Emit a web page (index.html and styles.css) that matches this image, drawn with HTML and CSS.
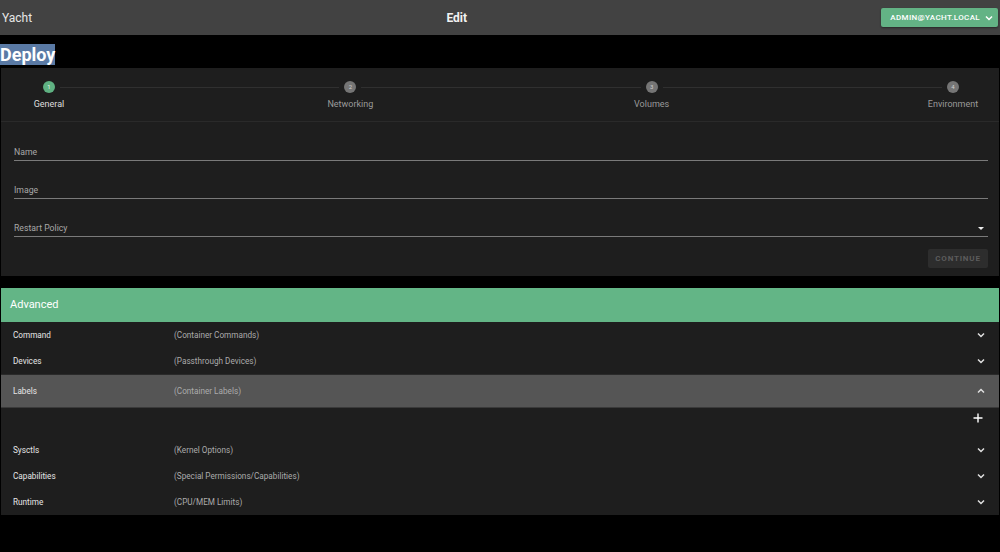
FILE: index.html
```html
<!DOCTYPE html>
<html lang="en">
<head>
    <meta charset="UTF-8">
    <meta name="viewport" content="width=device-width, initial-scale=1.0">
    <title>Yacht - Edit</title>
    <link rel="stylesheet" href="styles.css">
</head>
<body>
    <header class="topbar">
        <span class="brand">Yacht</span>
        <span class="spacer"></span>
        <span class="page-title">Edit</span>
        <span class="spacer"></span>
        <button class="user-btn">ADMIN@YACHT.LOCAL
            <svg width="8" height="6" viewBox="0 0 8 6"><polyline points="1,1.5 4,4.5 7,1.5" fill="none" stroke="#fff" stroke-width="1.5"/></svg>
        </button>
    </header>

    <h1 class="deploy"><span>Deploy</span></h1>

    <section class="card">
        <div class="stepper">
            <div class="step active"><span class="dot">1</span><span class="step-label">General</span></div>
            <div class="connector"></div>
            <div class="step"><span class="dot">2</span><span class="step-label">Networking</span></div>
            <div class="connector"></div>
            <div class="step"><span class="dot">3</span><span class="step-label">Volumes</span></div>
            <div class="connector"></div>
            <div class="step"><span class="dot">4</span><span class="step-label">Environment</span></div>
        </div>
        <form class="form">
            <div class="field"><span class="field-label">Name</span></div>
            <div class="field"><span class="field-label">Image</span></div>
            <div class="field"><span class="field-label">Restart Policy</span><span class="caret"></span></div>
            <div class="actions">
                <button type="button" class="continue" disabled>CONTINUE</button>
            </div>
        </form>
    </section>

    <section class="card advanced">
        <div class="adv-header">Advanced</div>
        <div class="row"><span class="row-title">Command</span><span class="row-sub">(Container Commands)</span><svg class="chev" width="8" height="6" viewBox="0 0 8 6"><polyline points="1,1.5 4,4.5 7,1.5"/></svg></div>
        <div class="row"><span class="row-title">Devices</span><span class="row-sub">(Passthrough Devices)</span><svg class="chev" width="8" height="6" viewBox="0 0 8 6"><polyline points="1,1.5 4,4.5 7,1.5"/></svg></div>
        <div class="row open"><span class="row-title">Labels</span><span class="row-sub">(Container Labels)</span><svg class="chev" width="8" height="6" viewBox="0 0 8 6"><polyline points="1,4.5 4,1.5 7,4.5"/></svg></div>
        <div class="panel">
            <svg width="10" height="10" viewBox="0 0 10 10"><path d="M5 0.5V9.5M0.5 5H9.5" stroke="#fff" stroke-width="1.4"/></svg>
        </div>
        <div class="row"><span class="row-title">Sysctls</span><span class="row-sub">(Kernel Options)</span><svg class="chev" width="8" height="6" viewBox="0 0 8 6"><polyline points="1,1.5 4,4.5 7,1.5"/></svg></div>
        <div class="row"><span class="row-title">Capabilities</span><span class="row-sub">(Special Permissions/Capabilities)</span><svg class="chev" width="8" height="6" viewBox="0 0 8 6"><polyline points="1,1.5 4,4.5 7,1.5"/></svg></div>
        <div class="row"><span class="row-title">Runtime</span><span class="row-sub">(CPU/MEM Limits)</span><svg class="chev" width="8" height="6" viewBox="0 0 8 6"><polyline points="1,1.5 4,4.5 7,1.5"/></svg></div>
    </section>
</body>
</html>
```

FILE: styles.css
```css
* {
    box-sizing: border-box;
}
body {
    font-family: Roboto, "Liberation Sans", sans-serif;
    background-color: #000;
    color: #e0e0e0;
    margin: 0;
}
.topbar {
    display: flex;
    align-items: center;
    height: 35px;
    padding: 0 2px;
    background-color: #424242;
    box-shadow: 0 1px 3px rgba(0,0,0,.6);
    position: relative;
}
.brand {
    font-size: 12px;
    color: #e6e6e6;
}
.spacer {
    flex: 1;
}
.page-title {
    font-size: 12px;
    font-weight: 700;
    color: #f2f2f2;
}
.user-btn {
    display: flex;
    align-items: center;
    gap: 5px;
    height: 19px;
    padding: 0 5px 0 9px;
    background-color: #63b385;
    color: #fff;
    border: none;
    border-radius: 2px;
    font-family: inherit;
    font-size: 8px;
    font-weight: 500;
    letter-spacing: 0.35px;
    box-shadow: 0 1px 2px rgba(0,0,0,.4);
}
.deploy {
    margin: 7px 0 1px;
    font-size: 18px;
    line-height: 25px;
    font-weight: 700;
    color: #fff;
}
.deploy span {
    background-color: #5a7aa5;
}
.card {
    background-color: #1e1e1e;
    margin: 0 1px;
}
.stepper {
    display: flex;
    padding: 13px 35px 0 37px;
    height: 54px;
    border-bottom: 1px solid #2a2a2a;
}
.step {
    width: 22px;
    display: flex;
    flex-direction: column;
    align-items: center;
}
.dot {
    width: 12px;
    height: 12px;
    border-radius: 50%;
    background-color: #757575;
    color: #cfcfcf;
    font-size: 6px;
    line-height: 12px;
    text-align: center;
}
.step-label {
    margin-top: 6px;
    font-size: 9px;
    white-space: nowrap;
    color: #9a9a9a;
}
.step.active .dot {
    background-color: #5fb182;
    color: #e8f5ec;
}
.step.active .step-label {
    color: #dedede;
}
.connector {
    flex: 1;
    height: 1px;
    margin-top: 6px;
    background-color: #303030;
}
.form {
    padding: 1px 11px 8px 13px;
}
.field {
    height: 38px;
    display: flex;
    align-items: flex-end;
    justify-content: space-between;
    padding-bottom: 2px;
    border-bottom: 1px solid #7a7a7a;
}
.field-label {
    font-size: 8.7px;
    line-height: 11px;
    color: #a8a8a8;
}
.caret {
    width: 0;
    height: 0;
    margin: 0 4px 4px 0;
    border-left: 3px solid transparent;
    border-right: 3px solid transparent;
    border-top: 3px solid #eee;
}
.actions {
    display: flex;
    justify-content: flex-end;
    margin-top: 12px;
}
.continue {
    width: 60px;
    height: 19px;
    background-color: #2d2d2d;
    color: #5c5c5c;
    border: none;
    border-radius: 2px;
    font-family: inherit;
    font-size: 8px;
    font-weight: 700;
    letter-spacing: 0.8px;
}
.advanced {
    margin-top: 12px;
}
.adv-header {
    height: 34px;
    line-height: 34px;
    padding-left: 9px;
    background-color: #63b586;
    color: #fff;
    font-size: 11px;
}
.row {
    display: grid;
    grid-template-columns: 161px 1fr auto;
    align-items: center;
    height: 26px;
    padding: 0 14px 0 12px;
}
.row-title {
    font-size: 8.2px;
    color: #e6e6e6;
}
.row-sub {
    font-size: 8.2px;
    color: #ababab;
}
.chev polyline {
    fill: none;
    stroke: #e0e0e0;
    stroke-width: 1.5;
}
.row.open {
    height: 34px;
    background-color: #555;
    border-top: 1px solid #2a2a2a;
    border-bottom: 1px solid #3a3a3a;
}
.panel {
    display: flex;
    justify-content: flex-end;
    height: 29px;
    padding: 5px 16px 0 0;
}
```
